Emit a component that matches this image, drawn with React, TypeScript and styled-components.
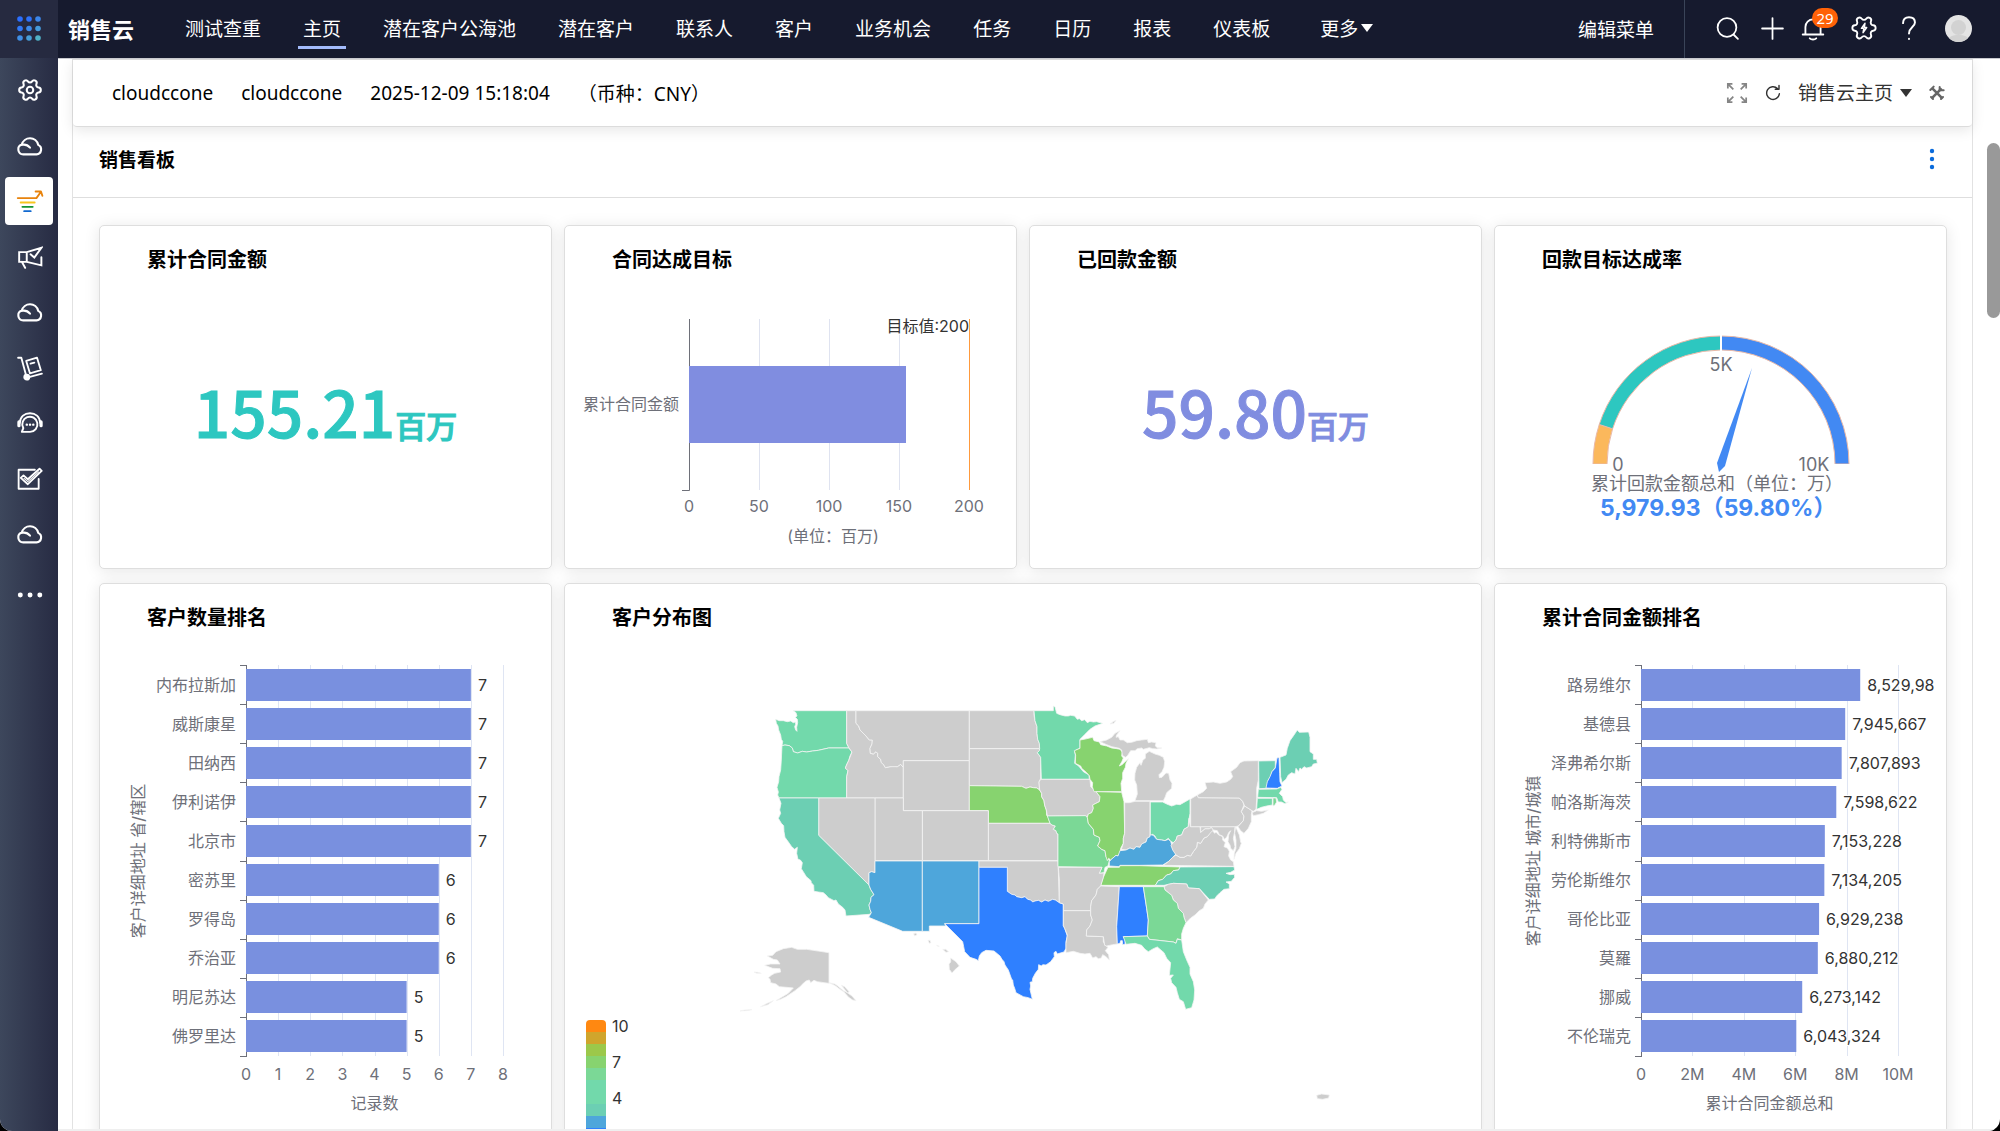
import React from "react";
import styled, { createGlobalStyle, css } from "styled-components";

const uiFont = `"Noto Sans", "Noto Sans CJK SC", sans-serif`;
const chartFont = `Inter, "Noto Sans CJK SC", sans-serif`;

const GlobalStyle = createGlobalStyle`
  * { box-sizing: border-box; }
  html, body { margin: 0; background: #000; }
  body { font-family: ${uiFont}; color: #000; }
  a { color: inherit; text-decoration: none; }
  button { border: 0; padding: 0; background: none; color: inherit; font: inherit; cursor: pointer; }
`;

/* ---------- shell ---------- */

const Shell = styled.div`
  display: flex;
  flex-direction: column;
  height: 100vh;
  overflow: hidden;
  background: #fff;
  border-radius: 0 0 12px 12px;
`;

const Header = styled.header`
  display: flex;
  align-items: stretch;
  flex: none;
  height: 58px;
  background: #161a2e;
  color: #fff;
  font-size: 19px;
`;

const Launcher = styled.button`
  display: flex;
  align-items: center;
  justify-content: center;
  width: 58px;
  background: #262a40;
`;

const AppName = styled.strong`
  align-self: center;
  margin: 0 46px 0 10px;
  font-size: 22px;
  line-height: 30px;
  white-space: nowrap;
`;

const Nav = styled.nav`
  display: flex;
  flex: 1;
  gap: 32px;
`;

const NavLink = styled.a<{ $active?: boolean }>`
  display: flex;
  align-items: center;
  gap: 3px;
  height: 49px;
  padding: 10px 5px 0;
  white-space: nowrap;
  border-bottom: 3px solid ${(p) => (p.$active ? "#a3bbfb" : "transparent")};
`;

const MoreLink = styled(NavLink)`
  margin-left: 8px;
`;

const EditMenu = styled.button`
  padding: 0 30px;
  border-right: 1px solid #3a4458;
  white-space: nowrap;
`;

const Tools = styled.div`
  display: flex;
  align-items: center;
  padding: 0 21px 2px 25px;
  gap: 11px;
`;

const ToolButton = styled.button`
  display: flex;
  align-items: center;
  justify-content: center;
  width: 34px;
  height: 40px;
`;

const BellButton = styled(ToolButton)`
  position: relative;
  justify-content: flex-start;
  width: 36px;
`;

const AvatarButton = styled(ToolButton)`
  width: 42px;
`;

const Badge = styled.span`
  position: absolute;
  top: 0;
  left: 12px;
  width: 26px;
  height: 20px;
  border-radius: 10px;
  background: #ff6207;
  font-size: 15px;
  line-height: 20px;
  text-align: center;
`;

const Avatar = styled.span`
  display: flex;
  width: 27px;
  height: 27px;
  border-radius: 50%;
  overflow: hidden;
`;

const Body = styled.div`
  display: flex;
  flex: 1;
  min-height: 0;
`;

const Sidebar = styled.aside`
  display: flex;
  flex-direction: column;
  align-items: center;
  flex: none;
  width: 58px;
  padding-top: 8px;
  background: linear-gradient(90deg, #3d475c, #272b43);
  color: #fff;
`;

const AppList = styled.div`
  display: flex;
  flex-direction: column;
  justify-content: space-between;
  height: 492px;
`;

const SideButton = styled.button<{ $active?: boolean }>`
  display: flex;
  align-items: center;
  justify-content: center;
  width: 48px;
  height: 48px;
  padding-left: 2px;
  border-radius: 4px;
  background: ${(p) => (p.$active ? "#fff" : "transparent")};
`;

const SideMore = styled(SideButton)`
  margin-top: 13px;
`;

const Main = styled.main`
  flex: 1;
  min-width: 0;
  margin: 0 14px;
  border: 1px solid #e2e2e2;
  border-width: 1px 1px 0;
`;

const Viewport = styled.div`
  display: flex;
  flex: 1;
  min-width: 0;
  overflow: hidden;
  border-top: 1px solid #c9cacf;
  border-bottom: 2px solid #efefef;
`;

const ScrollThumb = styled.div`
  flex: none;
  width: 13px;
  height: 175px;
  margin-top: 84px;
  border-radius: 7px;
  background: #999;
`;

/* ---------- page top bar ---------- */

const InfoBar = styled.section`
  display: flex;
  align-items: center;
  justify-content: space-between;
  height: 67px;
  padding: 0 24px 0 39px;
  border-bottom: 1px solid #dcdcdc;
  border-radius: 0 0 4px 4px;
  box-shadow: 0 3px 14px rgba(0, 0, 0, 0.1);
  font-size: 19px;
`;

const InfoGroup = styled.div`
  display: flex;
  align-items: center;
  gap: 28px;
  white-space: nowrap;
`;

const Controls = styled.div`
  display: flex;
  align-items: center;
  gap: 14px;
  color: #333;
`;

const IconButton = styled.button`
  display: flex;
  align-items: center;
  justify-content: center;
  width: 22px;
  height: 30px;
`;

const PagePicker = styled.label`
  display: flex;
  align-items: center;
  gap: 6px;
`;

const PageSelect = styled.select`
  appearance: none;
  width: 96px;
  padding: 0;
  border: 0;
  background: none;
  color: #333;
  font: 19px/30px ${uiFont};
`;

/* ---------- board ---------- */

const BoardHead = styled.div`
  display: flex;
  align-items: center;
  justify-content: space-between;
  height: 71px;
  padding: 0 29px 5px 26px;
  border-bottom: 1px solid #dedede;
`;

const BoardTitle = styled.h1`
  margin: 0;
  font-size: 19px;
  line-height: 30px;
`;

const Grid = styled.div`
  display: grid;
  grid-template-columns: repeat(4, minmax(0, 1fr));
  grid-template-rows: 344px auto;
  column-gap: 12px;
  row-gap: 14px;
  padding: 27px 25px 27px 26px;
`;

const Card = styled.article<{ $wide?: boolean }>`
  display: flex;
  flex-direction: column;
  overflow: hidden;
  border: 1px solid #dedede;
  border-radius: 5px;
  background: #fff;
  box-shadow: 0 2px 16px rgba(0, 0, 0, 0.1);
  ${(p) => p.$wide && css`grid-column: span 2;`}
`;

const CardTitle = styled.h2`
  margin: 0;
  padding: 19px 47px 0;
  font-size: 20px;
  line-height: 30px;
`;

const Metric = styled.p<{ $color: string }>`
  margin: 0;
  padding: 80px 0 0;
  text-align: center;
  color: ${(p) => p.$color};
  font: 500 64px/110px "Noto Sans CJK SC", sans-serif;
  -webkit-text-stroke: 1px ${(p) => p.$color};
  white-space: nowrap;
`;

const MetricUnit = styled.span`
  font-size: 31px;
`;

const Chart = styled.svg`
  display: block;
  flex: none;
  margin: 0 auto;
  font-family: ${chartFont};
  font-size: 16px;
`;

const AxisText = styled.text`
  fill: #6e7079;
  dominant-baseline: central;
`;

const ValueText = styled.text`
  fill: #333;
  stroke: #fff;
  stroke-width: 2px;
  paint-order: stroke;
  dominant-baseline: central;
`;

/* ---------- icons ---------- */

const gearPath =
  "M9.671 4.136a2.34 2.34 0 0 1 4.659 0 2.34 2.34 0 0 0 3.319 1.915 2.34 2.34 0 0 1 2.33 4.033 2.34 2.34 0 0 0 0 3.831 2.34 2.34 0 0 1-2.33 4.033 2.34 2.34 0 0 0-3.319 1.915 2.34 2.34 0 0 1-4.659 0 2.34 2.34 0 0 0-3.32-1.915 2.34 2.34 0 0 1-2.33-4.033 2.34 2.34 0 0 0 0-3.831A2.34 2.34 0 0 1 6.35 6.051a2.34 2.34 0 0 0 3.319-1.915";

type IconProps = { size?: number; width?: number; children: React.ReactNode };
const Icon = ({ size = 26, width = 2, children }: IconProps) => (
  <svg width={size} height={size} viewBox="0 0 24 24" fill="none" stroke="currentColor" strokeWidth={width} strokeLinecap="round" strokeLinejoin="round" aria-hidden="true">
    {children}
  </svg>
);

const GearIcon = () => (
  <Icon width={1.9}>
    <path d={gearPath} transform="rotate(30 12 12)" />
    <circle cx="12" cy="12" r="3" />
  </Icon>
);
const CloudIcon = () => (
  <Icon width={1.8} size={28}>
    <path d="M6.2 19.200h11.400a4.300 4.300 0 0 0 1.400-8.200A7.200 7.200 0 0 0 5 10.800a4.300 4.300 0 0 0 1.200 8.400z" />
    <path d="M5 11c3-.7 5.200.2 7 2.400" />
  </Icon>
);
const FunnelIcon = () => (
  <Icon width={1.6} size={28}>
    <path d="M1.5 9.5h16l3.6-5M16.8 3.900h4.600l1.200 3.600" stroke="#e8830c" />
    <path d="M4 13.300h12" stroke="#f7c51e" />
    <path d="M5.500 17h8.800" stroke="#149432" />
    <path d="M7 20.700h5.600" stroke="#1169d0" />
  </Icon>
);
const MegaphoneIcon = () => (
  <Icon width={1.8}>
    <path d="M2 7.500h7v9H2zM9 7.500l13.500-4-6.500 9-3.500-3M9 16.500l13.500 3.200v-7.500M4.500 16.500l3 5.500" strokeLinejoin="miter" />
  </Icon>
);
const CartIcon = () => (
  <Icon width={1.7}>
    <path d="M1 2.500h3l4.300 16M11 20.500l12-3.300" />
    <path d="M8.500 5.500l10-3 3.500 11.500-10 3zM12.500 8l3.500-1" />
    <circle cx="9" cy="20.500" r="2.300" fill="currentColor" />
  </Icon>
);
const HeadsetIcon = () => (
  <Icon width={1.8}>
    <path d="M2.500 12C3 6 7 3 12 3s9 3 9.500 9" />
    <path d="M1.800 11v3.500M22.200 11v3.500" strokeWidth="3" />
    <path d="M4.500 20.200h7.500a7 7 0 1 0-6.200-3.500z" />
    <path d="M9 13.500h.1M12 13.500h.1M15 13.500h.1" strokeWidth="2.200" />
  </Icon>
);
const TaskIcon = () => (
  <Icon width={1.7}>
    <path d="M20 12v9H1.500V3.500h15" />
    <path d="M3.500 11l2.500-2.300 4 3.500L20.800 2.500l2 2L10 16.800z" />
    <path d="M6.500 11.500l3.500 3L20 5.500" strokeWidth="1" />
  </Icon>
);
const DotsIcon = () => (
  <Icon>
    <path d="M3 12h.1M12 12h.1M21 12h.1" strokeWidth="4.500" />
  </Icon>
);
const SearchIcon = () => (
  <Icon width={1.7} size={25}>
    <circle cx="11.500" cy="11" r="9" />
    <path d="M18 18l4 4" />
  </Icon>
);
const PlusIcon = () => (
  <Icon width={1.7} size={25}>
    <path d="M12 2v20M2 12h20" />
  </Icon>
);
const BellIcon = () => (
  <Icon width={1.7}>
    <path d="M2.500 18h19M5 18v-7a7 7 0 0 1 14 0v7M9 21.500c1.500 1.500 4.500 1.500 6 0" />
  </Icon>
);
const BoltGearIcon = () => (
  <Icon size={28} width={1.6}>
    <path d={gearPath} transform="rotate(30 12 12)" />
    <path d="M12.800 8l-3 4.300h2.100L11.200 16l3.100-4.400h-2.100z" strokeWidth="1.300" />
  </Icon>
);
const HelpIcon = () => (
  <Icon width={1.8}>
    <path d="M6.500 7.500C6.500 4 8.500 2 12 2s5.500 2 5.500 5c0 4-5.500 4.500-5.500 10M12 22v.1" />
  </Icon>
);
const ExpandIcon = () => (
  <Icon size={22} width={1.9}>
    <path d="M2 7V2h5M2 2l6 6M17 2h5v5M22 2l-6 6M2 17v5h5M2 22l6-6M17 22h5v-5M22 22l-6-6" stroke="#858585" strokeLinecap="butt" strokeLinejoin="miter" />
  </Icon>
);
const RefreshIcon = () => (
  <Icon size={18} width={1.9}>
    <path d="M20.500 13a8.500 8.500 0 1 1-2.500-7M20 2v5h-5" />
  </Icon>
);
const WrenchIcon = () => (
  <Icon size={16} width={4}>
    <path d="M5 5l15 15M19 5L4 20" stroke="#666" strokeLinecap="butt" />
    <path d="M2 7.500l5-5M16 3v5h6M3 18l3 3M18 21l3-3" stroke="#666" strokeWidth="3" />
  </Icon>
);
const Caret = () => (
  <svg width="12" height="10" viewBox="0 0 12 10" aria-hidden="true">
    <path d="M0 1h12L6 9z" fill="currentColor" />
  </svg>
);

const launcherColors = ["#2b6fff", "#2d72fb", "#3b86ea", "#3079f6", "#3d8bea", "#449bdc", "#3f8fe6", "#469fd8", "#4fb2c6"];
const LauncherIcon = () => (
  <svg width="26" height="26" viewBox="0 0 26 26" aria-hidden="true">
    {launcherColors.map((c, i) => (
      <circle key={i} cx={4 + (i % 3) * 9} cy={3 + Math.floor(i / 3) * 9.5} r="2.800" fill={c} />
    ))}
  </svg>
);

/* ---------- charts ---------- */

const TargetChart = () => {
  const x0 = 124, step = 70, top = 44, bottom = 215;
  return (
    <Chart width="451" height="290" role="img" aria-label="合同达成目标">
      {[1, 2, 3].map((i) => (
        <rect key={i} x={x0 + step * i} y={top} width="1" height={bottom - top} fill="#dfe3f0" />
      ))}
      <path d={`M${x0 + 0.5} ${top}V${bottom + 0.5}H${x0 - 7}`} fill="none" stroke="#6e7079" />
      <rect x={x0} y="91" width="217" height="77" fill="#808de0" />
      <rect x={x0 + 280} y={top} width="1" height={bottom - top} fill="#ff9a3c" />
      <ValueText x={x0 + 280} y="51" textAnchor="end">目标值:200</ValueText>
      <AxisText x="114" y="129" textAnchor="end">累计合同金额</AxisText>
      {[0, 50, 100, 150, 200].map((v, i) => (
        <AxisText key={v} x={x0 + step * i} y="231" textAnchor="middle">{v}</AxisText>
      ))}
      <AxisText x="268" y="261" textAnchor="middle">(单位：百万)</AxisText>
    </Chart>
  );
};

const arc = (from: number, to: number) => {
  const pt = (r: number, f: number) => {
    const a = Math.PI * (1 - f);
    return `${(226 + r * Math.cos(a)).toFixed(2)} ${(189 - r * Math.sin(a)).toFixed(2)}`;
  };
  return `M${pt(128, from)}A128 128 0 0 1 ${pt(128, to)}L${pt(114, to)}A114 114 0 0 0 ${pt(114, from)}Z`;
};

const GaugeName = styled(AxisText)`
  font-size: 18px;
`;
const GaugeValue = styled(AxisText)`
  fill: #4289f3;
  font-size: 23px;
  font-weight: 700;
`;

const GaugeChart = () => (
  <Chart width="451" height="290" role="img" aria-label="回款目标达成率">
    <g stroke="#e9b9a8" strokeWidth="1">
      <path d={arc(0, 0.1)} fill="#fbb85c" />
      <path d={arc(0.1, 0.5)} fill="#2dc7c0" />
      <path d={arc(0.5, 1)} fill="#4289f3" />
    </g>
    <path d="M226 60V76M97 190H113M339 190H355" stroke="#fff" strokeWidth="2" />
    <path d="M257 93L230 191L224 197L222 188Z" fill="#4289f3" />
    <GaugeName x="226" y="89" textAnchor="middle">5K</GaugeName>
    <GaugeName x="123" y="189" textAnchor="middle">0</GaugeName>
    <GaugeName x="319" y="189" textAnchor="middle">10K</GaugeName>
    <GaugeName x="96" y="208">累计回款金额总和（单位：万）</GaugeName>
    <GaugeValue x="105" y="233">5,979.93（59.80%）</GaugeValue>
  </Chart>
);

type Row = { name: string; value: number; label: string };
type RankProps = { title: string; rows: Row[]; max: number; ticks: string[]; xTitle: string; yTitle: string };

const RankChart = ({ title, rows, max, ticks, xTitle, yTitle }: RankProps) => {
  const x0 = 146, width = 257, top = 32, bottom = 423;
  const band = (bottom - top) / rows.length;
  return (
    <Chart width="451" height="510" role="img" aria-label={title}>
      {ticks.slice(1).map((t, i) => (
        <rect key={t} x={Math.round(x0 + (width * (i + 1)) / (ticks.length - 1))} y={top} width="1" height={bottom - top} fill="#dfe5f3" />
      ))}
      <rect x={x0} y={top} width="1" height={bottom - top} fill="#6e7079" />
      {[...rows, null].map((_, i) => (
        <rect key={i} x={x0 - 6} y={Math.round(top + band * i)} width="7" height="1" fill="#6e7079" />
      ))}
      {rows.map((r, i) => {
        const w = (width * r.value) / max;
        const cy = top + band * (i + 0.5);
        return (
          <g key={r.name}>
            <rect x={x0} y={Math.round(cy - 16)} width={w} height="32" fill="#7990df" />
            <AxisText x={x0 - 10} y={cy} textAnchor="end">{r.name}</AxisText>
            <ValueText x={x0 + w + 7} y={cy}>{r.label}</ValueText>
          </g>
        );
      })}
      {ticks.map((t, i) => (
        <AxisText key={t} x={x0 + (width * i) / (ticks.length - 1)} y="441" textAnchor="middle">{t}</AxisText>
      ))}
      <AxisText x={x0 + width / 2} y="470" textAnchor="middle">{xTitle}</AxisText>
      <AxisText transform="translate(38 228) rotate(-90)" textAnchor="middle">{yTitle}</AxisText>
    </Chart>
  );
};

const stateRows: Row[] = [
  ["内布拉斯加", 7], ["威斯康星", 7], ["田纳西", 7], ["伊利诺伊", 7], ["北京市", 7],
  ["密苏里", 6], ["罗得岛", 6], ["乔治亚", 6], ["明尼苏达", 5], ["佛罗里达", 5],
].map(([name, value]) => ({ name: String(name), value: Number(value), label: String(value) }));

const cityRows: Row[] = [
  { name: "路易维尔", value: 8529980, label: "8,529,98" },
  { name: "基德县", value: 7945667, label: "7,945,667" },
  { name: "泽弗希尔斯", value: 7807893, label: "7,807,893" },
  { name: "帕洛斯海茨", value: 7598622, label: "7,598,622" },
  { name: "利特佛斯市", value: 7153228, label: "7,153,228" },
  { name: "劳伦斯维尔", value: 7134205, label: "7,134,205" },
  { name: "哥伦比亚", value: 6929238, label: "6,929,238" },
  { name: "莫羅", value: 6880212, label: "6,880,212" },
  { name: "挪威", value: 6273142, label: "6,273,142" },
  { name: "不伦瑞克", value: 6043324, label: "6,043,324" },
];

/* ---------- map ---------- */

const none = "#cdcdcd", c1 = "#2f80ff", c2 = "#4ea6db", c3 = "#6ccfb3", c5 = "#72d9ab", c6 = "#7bd896", c7 = "#87d36f";

const west: [string, string][] = [
  [c5, "160,92 320,92 320,190 327,204 266,204 235,211 218,213 200,216 187,214 173,219 160,215 157,204 148,197 135,195 126,197 128,184 124,178 122,165 116,150 114,138 109,130 107,118 118,122 130,122 142,125 152,123 160,128 166,126 167,133 164,140 167,150 171,154 170,142 173,128 172,118 166,112 171,108 168,98"],
  [c5, "126,197 135,195 148,197 157,204 160,215 173,219 187,214 200,216 218,213 235,211 266,204 327,204 336,216 330,228 326,242 321,252 316,264 324,272 320,290 320,354 117,354 113,345 115,336 111,322 116,305 117,290 122,270 124,240"],
  [none, "320,92 348,92 348,130 356,138 360,150 378,168 388,180 397,180 396,192 390,205 391,220 400,222 408,215 413,220 413,230 422,238 424,248 431,254 436,263 450,260 462,259 472,260 482,253 490,262 490,354 320,354 320,290 324,272 316,264 321,252 326,242 336,216 327,204 320,190"],
  [none, "348,92 688,92 688,242 490,242 490,262 482,253 472,260 450,260 436,263 431,254 424,248 422,238 413,230 413,220 408,215 400,222 391,220 390,205 396,192 397,180 388,180 378,168 360,150 356,138 348,130"],
  [none, "490,242 688,242 688,392 490,392"],
  [none, "688,92 882,92 882,106 885,122 891,140 891,160 893,178 898,190 899,206 688,206"],
  [none, "688,206 899,206 898,212 892,218 902,232 902,295 897,306 899,329 890,324 880,323 870,321 858,325 845,319 688,317"],
  [c7, "688,317 845,319 858,325 870,321 880,323 890,324 899,330 905,340 905,350 912,362 914,376 919,390 920,405 926,415 930,430 745,430 745,392 688,392"],
  [none, "745,430 930,430 936,435 946,438 940,448 948,452 950,460 954,462 954,542 745,542"],
  [none, "547,392 745,392 745,542 547,542"],
  [none, "405,354 490,354 490,392 547,392 547,542 405,542"],
  [none, "236,354 405,354 405,578 395,575 387,578 387,615 236,466"],
  [c3, "117,354 236,354 236,466 387,615 392,628 402,644 393,652 392,664 387,675 390,688 394,698 388,703 318,708 315,690 308,682 295,672 288,660 282,662 265,653 258,645 250,638 235,636 222,634 221,616 214,608 213,602 199,590 184,566 187,548 181,540 174,538 170,520 172,502 164,508 155,500 148,490 135,472 132,455 131,437 124,430 115,415 122,400 119,390 123,370"],
  [c2, "405,543 547,543 547,754 488,754 386,712 394,698 390,688 387,675 392,664 393,652 402,644 392,628 387,615 387,578 395,575 405,578"],
  [c2, "547,543 717,543 717,731 614,731 617,738 568,738 568,754 547,754"],
  [none, "717,543 954,543 956,600 958,668 946,660 938,658 925,664 915,660 905,666 895,661 885,663 878,666 872,660 863,658 855,650 845,653 830,650 825,645 815,643 802,634 802,562 717,562"],
  [c1, "717,562 802,562 802,634 815,643 825,645 830,650 845,653 855,650 863,658 872,660 878,666 885,663 895,661 905,666 915,660 925,664 938,658 946,660 958,668 970,672 970,737 974,745 982,768 978,785 978,805 972,816 958,820 952,822 948,814 942,818 943,830 932,845 918,855 908,854 904,858 896,854 895,868 886,880 878,895 877,905 870,907 872,918 870,928 877,958 865,953 850,950 828,938 824,925 820,915 818,900 815,898 805,870 795,855 792,845 786,838 780,828 762,813 738,811 725,818 718,828 715,842 708,838 690,832 674,815 671,800 668,785 645,762 614,731 717,731"],
  [c5, "882,92 940,92 940,78 945,80 950,100 960,104 975,108 985,108 992,106 1004,108 1012,118 1018,116 1025,122 1034,119 1042,128 1050,124 1060,126 1070,125 1088,130 1065,138 1050,148 1035,163 1020,178 1020,205 1008,210 1004,215 1006,225 1004,250 1016,258 1030,275 1047,285 1048,298 904,298 902,232 892,218 898,212 899,206 898,190 893,178 891,160 891,140 885,122"],
  [none, "902,298 1050,298 1052,320 1068,335 1080,350 1078,365 1058,375 1060,385 1055,398 1045,402 1042,410 1036,407 922,408 919,390 914,376 912,362 905,350 905,340 899,330 897,306"],
  [c6, "922,408 1036,407 1042,412 1045,430 1060,448 1062,465 1078,472 1080,482 1073,498 1085,508 1095,512 1098,530 1108,542 1104,558 1095,562 1092,578 1078,580 1086,562 954,560 954,462 950,460 948,452 940,448 946,438 936,435 930,430"],
  [none, "82,828 98,826 108,815 130,806 155,802 172,808 200,808 240,814 267,818 267,910 252,908 232,905 222,901 212,908 208,900 198,903 190,910 180,920 165,932 150,942 138,950 122,958 108,962 125,952 145,940 160,924 140,922 118,920 108,912 92,908 90,898 85,893 95,885 104,880 122,876 120,866 98,865 74,856 92,852 120,852 112,840 100,838"],
  [none, "267,908 285,912 296,920 310,932 322,938 336,948 348,962 338,960 326,952 312,936 300,928 284,916"],
  [none, "304,916 314,920 328,936 322,938"],
  [none, "100,962 82,970 62,980 84,974"],
  [none, "0,993 14,990 36,989 18,992"],
  [none, "42,876 52,877 64,880 50,880"],
  [none, "632,834 648,845 658,858 646,868 636,879 628,868 627,852 632,846"],
  [none, "608,808 617,808 626,815 618,817"],
  [none, "564,781 570,781 573,788 568,790"],
  [none, "521,761 528,759 531,764 524,768"],
  [none, "590,796 598,799 594,799"],
  [none, "1730,1246 1745,1242 1768,1245 1766,1254 1748,1258 1732,1256"],
];

const east: [string, string][] = [
  [c7, "120,180 132,178 158,172 162,182 178,186 182,194 200,198 215,204 230,206 240,208 247,216 245,228 250,234 246,244 238,258 246,254 265,236 258,250 256,262 248,278 248,295 243,310 245,335 162,335 157,320 158,308 150,298 148,287 140,278 125,265 122,258 106,250 107,225 103,212 120,205"],
  [none, "180,185 200,180 215,172 225,160 240,152 230,165 228,172 235,170 240,180 250,180 262,188 275,187 290,182 305,180 322,178 325,188 335,186 348,188 346,198 352,203 366,204 350,207 338,206 328,203 310,208 305,204 292,206 285,212 272,212 262,228 256,232 247,226 245,210 238,205 215,200 200,194"],
  [none, "210,132 222,124 228,121 222,130"],
  [none, "316,222 328,214 345,222 358,226 370,232 374,245 372,262 366,275 357,284 358,293 366,292 378,279 386,280 390,300 396,310 395,325 380,338 376,350 370,362 285,362 292,342 290,315 284,300 285,280 290,262 300,248 303,256 309,240 316,235"],
  [c7, "168,335 245,337 252,365 254,460 250,475 250,490 242,505 240,518 234,528 228,526 212,540 206,535 202,542 198,530 195,512 185,508 173,498 180,482 178,472 162,465 160,448 145,430 142,412 145,402 155,398 160,385 158,375 178,365 180,350"],
  [none, "254,368 268,368 285,364 330,364 330,470 322,474 318,486 305,492 300,502 288,500 282,508 270,504 258,510 244,508 250,490 250,475 254,460"],
  [c5, "331,366 368,366 380,372 395,378 410,373 420,374 450,357 450,400 445,430 445,440 432,448 425,465 412,468 408,480 400,488 392,484 385,475 375,482 365,480 350,478 345,468 338,463 331,467"],
  [c2, "208,558 208,545 212,540 228,526 234,528 240,512 258,510 270,504 282,508 288,500 300,502 305,492 318,486 322,474 330,470 331,464 340,466 345,472 350,478 365,480 375,482 385,478 392,484 398,505 408,522 398,532 385,545 368,555 300,556 240,556 238,560"],
  [c7, "204,562 238,562 240,557 300,557 420,561 416,570 400,572 392,582 380,585 368,598 355,602 346,616 182,616 190,592"],
  [c3, "420,561 582,560 584,570 572,577 558,580 570,584 583,583 584,592 574,604 558,606 568,612 568,626 552,628 540,638 530,648 524,657 508,658 478,626 445,624 440,612 400,610 372,616 346,616 355,602 368,598 380,585 392,582 400,572 416,570"],
  [none, "372,620 385,613 400,610 440,612 445,624 478,626 505,660 495,672 490,685 478,692 465,705 452,714 438,728 432,712 430,700 415,685 412,670 400,660 395,646 375,630"],
  [none, "370,556 385,545 398,532 408,525 420,532 432,532 442,526 452,528 460,515 470,502 472,487 482,490 492,474 502,470 516,450 524,460 528,456 535,464 548,470 548,480 556,488 552,500 562,504 568,514 566,528 572,540 580,545 582,559"],
  [none, "400,488 408,480 412,468 425,465 432,448 445,440 447,415 451,440 480,440 482,457 495,446 508,446 514,442 520,450 512,458 502,470 492,474 482,490 472,487 470,502 460,515 452,528 442,526 432,532 420,532 408,525 398,510 393,496"],
  [none, "482,440 585,440 584,455 580,475 585,500 580,512 572,505 570,495 564,485 566,465 572,452 566,458 560,472 553,478 548,468 538,464 532,452 520,450 514,442 508,446 495,446 482,457"],
  [none, "587,440 598,465 602,486 604,490 598,506 588,520 582,538 583,520 588,505 588,480 584,460"],
  [none, "452,357 472,345 475,353 598,354 608,364 612,375 604,395 612,408 610,422 595,438 585,440 452,440"],
  [none, "614,378 636,392 634,404 634,425 625,445 612,460 602,452 594,440 610,422 612,408 604,395"],
  [none, "472,345 490,335 500,325 495,308 520,306 540,310 560,306 572,298 578,290 572,275 590,262 600,248 612,243 655,242 655,300 650,325 650,360 648,388 640,394 636,392 614,378 608,364 598,354 475,353"],
  [none, "636,398 650,392 665,394 685,390 670,400 655,404 640,407"],
  [c3, "656,243 706,242 706,262 696,275 692,290 685,300 680,325 657,326"],
  [c1, "711,234 717,232 719,280 720,305 726,318 712,325 678,324 682,305 690,290 696,275 706,264"],
  [c3, "720,232 738,225 742,205 750,182 762,165 772,150 778,157 806,156 810,172 810,215 820,222 820,238 830,238 832,250 820,252 815,260 800,264 792,260 785,268 780,264 776,275 768,265 765,282 755,278 745,285 738,298 726,308 722,290"],
  [c5, "655,328 710,327 722,322 726,328 718,340 728,350 730,360 738,368 745,366 735,371 724,366 715,366 710,353 653,352"],
  [c5, "652,355 697,355 697,375 680,378 664,382 650,388"],
  [c6, "699,354 708,354 710,366 704,376 699,378"],
  [none, "55,562 186,562 178,580 192,579 190,592 182,618 172,628 168,645 155,662 152,680 152,692 70,692 70,672 58,668 58,600"],
  [none, "70,692 152,692 152,705 157,720 150,738 140,750 139,768 190,770 190,785 196,796 204,802 196,812 206,824 208,840 198,830 188,824 184,834 175,836 168,830 158,834 150,820 135,822 120,820 100,814 78,818 78,790 82,765 74,745 70,737"],
  [none, "182,618 238,620 230,740 232,792 218,794 200,798 194,796 190,770 139,768 140,750 150,738 157,720 152,705 152,680 155,662 168,645 172,628"],
  [c1, "238,620 310,620 320,685 325,720 322,768 250,770 256,782 255,793 248,794 247,782 242,782 240,790 232,792 230,740"],
  [c6, "310,620 372,620 375,630 395,646 400,660 412,670 415,685 430,700 432,712 438,728 430,745 425,762 425,780 412,776 408,790 400,786 328,778 322,768 325,720 320,685"],
  [c5, "250,770 322,768 328,778 400,786 408,790 412,778 425,780 430,815 440,840 450,862 450,882 460,905 464,930 462,960 455,983 437,988 430,965 418,958 412,938 408,922 395,908 392,895 400,885 388,886 392,848 380,835 372,818 352,801 340,806 325,815 315,808 305,796 285,790 258,793"],
];

const legend = ["#ff8811", "#d0a52c", "#9cc84a", "#87d36f", "#7bd896", "#72d9ab", "#72d9ab", "#6ccfb3", "#4ea6db", "#2f80ff"];

const MapChart = () => (
  <Chart width="916" height="510" role="img" aria-label="客户分布图">
    <clipPath id="legend-shape">
      <rect x="21" y="387" width="20" height="140" rx="4" />
    </clipPath>
    <g transform="translate(175 47) scale(0.33333)" stroke="#f4f4f4" strokeWidth="2.400" strokeLinejoin="round">
      {west.map(([fill, points]) => <polygon key={points} fill={fill} points={points} />)}
      <g transform="translate(900 0)">
        {east.map(([fill, points]) => <polygon key={points} fill={fill} points={points} />)}
      </g>
    </g>
    <g clipPath="url(#legend-shape)">
      {legend.map((fill, i) => <rect key={i} x="21" y={387 + i * 12} width="20" height="12" fill={fill} />)}
    </g>
    {[10, 7, 4].map((v, i) => <ValueText key={v} x="47" y={393 + i * 36}>{v}</ValueText>)}
  </Chart>
);

/* ---------- page ---------- */

const navItems = ["测试查重", "主页", "潜在客户公海池", "潜在客户", "联系人", "客户", "业务机会", "任务", "日历", "报表", "仪表板"];

const sideItems: [string, React.ReactNode][] = [
  ["设置", <GearIcon />], ["云应用", <CloudIcon />], ["销售云", <FunnelIcon />], ["营销", <MegaphoneIcon />], ["云服务", <CloudIcon />],
  ["订单", <CartIcon />], ["客服", <HeadsetIcon />], ["待办", <TaskIcon />], ["云平台", <CloudIcon />],
];

export default function App() {
  return (
    <Shell>
      <GlobalStyle />
      <Header>
        <Launcher aria-label="应用"><LauncherIcon /></Launcher>
        <AppName>销售云</AppName>
        <Nav>
          {navItems.map((item) => (
            <NavLink key={item} href="#" $active={item === "主页"}>{item}</NavLink>
          ))}
          <MoreLink href="#">更多<Caret /></MoreLink>
        </Nav>
        <EditMenu>编辑菜单</EditMenu>
        <Tools>
          <ToolButton aria-label="搜索"><SearchIcon /></ToolButton>
          <ToolButton aria-label="新建"><PlusIcon /></ToolButton>
          <BellButton aria-label="通知"><BellIcon /><Badge>29</Badge></BellButton>
          <ToolButton aria-label="设置"><BoltGearIcon /></ToolButton>
          <ToolButton aria-label="帮助"><HelpIcon /></ToolButton>
          <AvatarButton aria-label="账户">
            <Avatar>
              <svg width="27" height="27" viewBox="0 0 27 27" aria-hidden="true">
                <rect width="27" height="27" fill="#e4e4e4" />
                <path d="M3 27c0-6 5-7 10.500-7S24 21 24 27z" fill="#d2d2d2" />
                <circle cx="13.500" cy="12.500" r="7.500" fill="#d2d2d2" />
              </svg>
            </Avatar>
          </AvatarButton>
        </Tools>
      </Header>
      <Body>
        <Sidebar>
          <AppList>
            {sideItems.map(([name, icon]) => (
              <SideButton key={name} aria-label={name} $active={name === "销售云"}>{icon}</SideButton>
            ))}
          </AppList>
          <SideMore aria-label="更多应用"><DotsIcon /></SideMore>
        </Sidebar>
        <Viewport>
          <Main>
            <InfoBar>
              <InfoGroup>
                <span>cloudccone</span>
                <span>cloudccone</span>
                <span>2025-12-09 15:18:04</span>
                <span>（币种：CNY）</span>
              </InfoGroup>
              <Controls>
                <IconButton aria-label="全屏"><ExpandIcon /></IconButton>
                <IconButton aria-label="刷新"><RefreshIcon /></IconButton>
                <PagePicker>
                  <PageSelect aria-label="主页">
                    <option>销售云主页</option>
                  </PageSelect>
                  <Caret />
                </PagePicker>
                <IconButton aria-label="工具"><WrenchIcon /></IconButton>
              </Controls>
            </InfoBar>
            <BoardHead>
              <BoardTitle>销售看板</BoardTitle>
              <IconButton aria-label="更多操作">
                <svg width="6" height="24" viewBox="0 0 6 24" fill="#0a6bdc" aria-hidden="true">
                  <circle cx="3" cy="3" r="2.200" /><circle cx="3" cy="11" r="2.200" /><circle cx="3" cy="19" r="2.200" />
                </svg>
              </IconButton>
            </BoardHead>
            <Grid>
              <Card>
                <CardTitle>累计合同金额</CardTitle>
                <Metric $color="#2dc7c0">155.21<MetricUnit>百万</MetricUnit></Metric>
              </Card>
              <Card>
                <CardTitle>合同达成目标</CardTitle>
                <TargetChart />
              </Card>
              <Card>
                <CardTitle>已回款金额</CardTitle>
                <Metric $color="#808de0">59.80<MetricUnit>百万</MetricUnit></Metric>
              </Card>
              <Card>
                <CardTitle>回款目标达成率</CardTitle>
                <GaugeChart />
              </Card>
              <Card>
                <CardTitle>客户数量排名</CardTitle>
                <RankChart title="客户数量排名" rows={stateRows} max={8} ticks={["0", "1", "2", "3", "4", "5", "6", "7", "8"]} xTitle="记录数" yTitle="客户详细地址 省/辖区" />
              </Card>
              <Card $wide>
                <CardTitle>客户分布图</CardTitle>
                <MapChart />
              </Card>
              <Card>
                <CardTitle>累计合同金额排名</CardTitle>
                <RankChart title="累计合同金额排名" rows={cityRows} max={10000000} ticks={["0", "2M", "4M", "6M", "8M", "10M"]} xTitle="累计合同金额总和" yTitle="客户详细地址 城市/城镇" />
              </Card>
            </Grid>
          </Main>
          <ScrollThumb />
        </Viewport>
      </Body>
    </Shell>
  );
}
